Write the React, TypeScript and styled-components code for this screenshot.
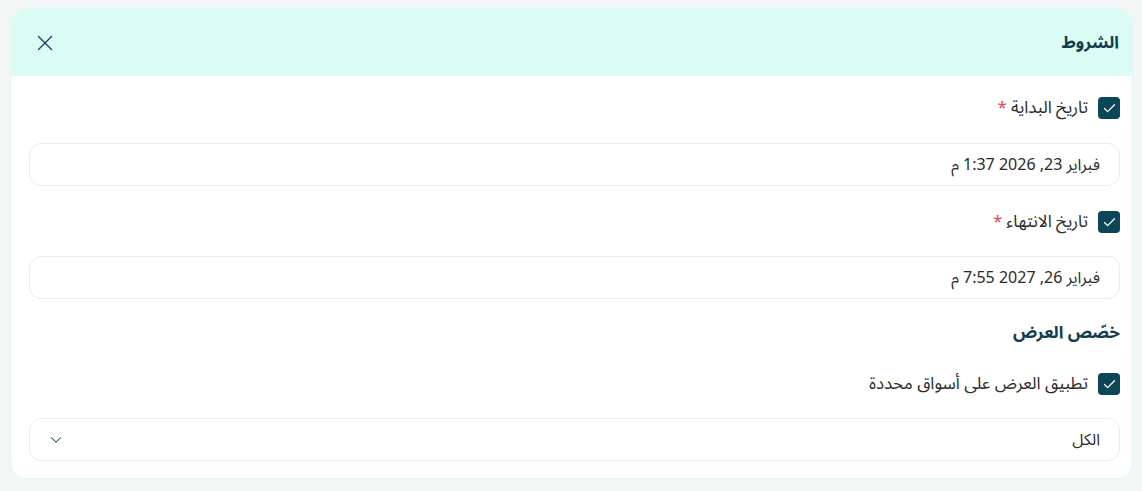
import styled, { createGlobalStyle } from "styled-components";
import { X, Check, ChevronDown } from "lucide-react";

const GlobalStyle = createGlobalStyle`
  body {
    margin: 0;
    background: #f4f5f5;
    font-family: "Noto Sans Arabic", "Noto Sans Arabic UI", "Noto Sans", "DejaVu Sans", sans-serif;
  }
`;

const Page = styled.div`
  padding: 8px 9px 12px 10px;
`;

const Card = styled.div`
  direction: rtl;
  background: #ffffff;
  border: 1px solid #e3f8f2;
  border-radius: 16px;
  overflow: hidden;
`;

const Header = styled.div`
  height: 67px;
  background: #dafcf5;
  display: flex;
  align-items: center;
  justify-content: space-between;
  padding: 0 13px 0 21px;
`;

const Title = styled.h2`
  margin: 0;
  font-size: 17px;
  font-weight: 700;
  color: #123d4e;
`;

const CloseButton = styled.button`
  background: none;
  border: none;
  padding: 0;
  display: flex;
  color: #1c4a5f;
  cursor: pointer;
`;

const Body = styled.div`
  padding: 20px 12px 17px 18px;
  display: flex;
  flex-direction: column;
`;

const CheckRow = styled.label<{ $top?: number }>`
  display: flex;
  align-items: center;
  gap: 10px;
  height: 24px;
  margin-top: ${(p) => p.$top ?? 0}px;
  font-size: 17px;
  color: #2b2b2b;
`;

const Box = styled.span`
  width: 22px;
  height: 22px;
  border-radius: 4px;
  background: #0b4656;
  color: #fff;
  display: flex;
  align-items: center;
  justify-content: center;
`;

const Required = styled.span`
  color: #e5484d;
  margin-right: 4px;
`;

const Input = styled.div<{ $top?: number }>`
  height: 43px;
  box-sizing: border-box;
  margin-top: ${(p) => p.$top ?? 0}px;
  border: 1px solid #ebebeb;
  border-radius: 12px;
  display: flex;
  align-items: center;
  justify-content: space-between;
  padding: 0 19px 0 17px;
  font-size: 16px;
  color: #2b2b2b;
`;

const SectionTitle = styled.h3`
  margin: 23px 0 0;
  height: 22px;
  line-height: 22px;
  font-size: 17px;
  font-weight: 700;
  color: #123d4e;
`;

const CheckBox = () => (
  <Box>
    <Check size={15} strokeWidth={2} />
  </Box>
);

export default function App() {
  return (
    <>
      <GlobalStyle />
      <Page>
        <Card>
          <Header>
            <Title>الشروط</Title>
            <CloseButton aria-label="إغلاق">
              <X size={26} strokeWidth={1.3} />
            </CloseButton>
          </Header>
          <Body>
            <CheckRow>
              <CheckBox />
              <span>
                تاريخ البداية<Required>*</Required>
              </span>
            </CheckRow>
            <Input $top={23}>
              <span>فبراير 23, 2026 1:37 م</span>
            </Input>
            <CheckRow $top={24}>
              <CheckBox />
              <span>
                تاريخ الانتهاء<Required>*</Required>
              </span>
            </CheckRow>
            <Input $top={22}>
              <span>فبراير 26, 2027 7:55 م</span>
            </Input>
            <SectionTitle>خصّص العرض</SectionTitle>
            <CheckRow $top={28}>
              <CheckBox />
              <span>تطبيق العرض على أسواق محددة</span>
            </CheckRow>
            <Input $top={22}>
              <span>الكل</span>
              <ChevronDown size={18} strokeWidth={1.4} color="#1c4a5f" />
            </Input>
          </Body>
        </Card>
      </Page>
    </>
  );
}
